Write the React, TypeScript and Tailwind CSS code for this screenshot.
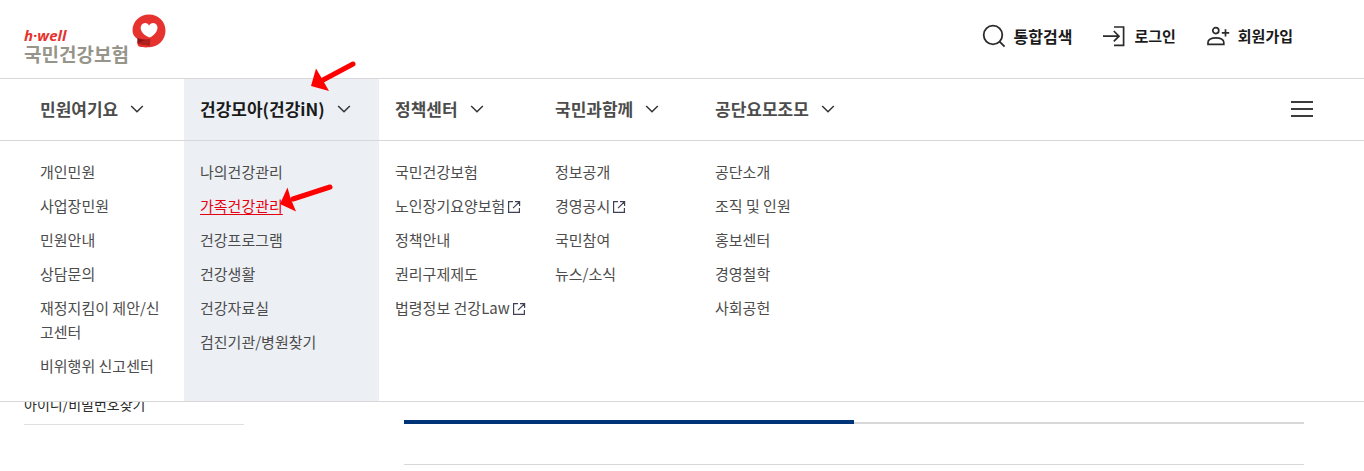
import { ReactNode } from "react";
import clsx from "clsx";

type MenuItem = {
  label: string;
  external?: boolean;
  current?: boolean;
};

type MenuGroup = {
  title: string;
  active?: boolean;
  items: MenuItem[];
};

const menu: MenuGroup[] = [
  {
    title: "민원여기요",
    items: [
      { label: "개인민원" },
      { label: "사업장민원" },
      { label: "민원안내" },
      { label: "상담문의" },
      { label: "재정지킴이 제안/신고센터" },
      { label: "비위행위 신고센터" },
    ],
  },
  {
    title: "건강모아(건강iN)",
    active: true,
    items: [
      { label: "나의건강관리" },
      { label: "가족건강관리", current: true },
      { label: "건강프로그램" },
      { label: "건강생활" },
      { label: "건강자료실" },
      { label: "검진기관/병원찾기" },
    ],
  },
  {
    title: "정책센터",
    items: [
      { label: "국민건강보험" },
      { label: "노인장기요양보험", external: true },
      { label: "정책안내" },
      { label: "권리구제제도" },
      { label: "법령정보 건강Law", external: true },
    ],
  },
  {
    title: "국민과함께",
    items: [
      { label: "정보공개" },
      { label: "경영공시", external: true },
      { label: "국민참여" },
      { label: "뉴스/소식" },
    ],
  },
  {
    title: "공단요모조모",
    items: [
      { label: "공단소개" },
      { label: "조직 및 인원" },
      { label: "홍보센터" },
      { label: "경영철학" },
      { label: "사회공헌" },
    ],
  },
];

const columns = "grid grid-cols-[160px_195px_160px_160px_160px]";

function ChevronIcon() {
  return (
    <svg
      viewBox="0 0 14 8"
      fill="none"
      stroke="#333"
      strokeWidth="1.5"
      className="h-2 w-3.5 shrink-0"
    >
      <path d="M1.200 1L7 6.800 12.800 1" />
    </svg>
  );
}

function ExternalIcon() {
  return (
    <svg
      viewBox="0 0 14 14"
      fill="none"
      stroke="#3f3f55"
      strokeWidth="1.2"
      className="ml-0.5 inline-block size-3.5 align-[-2px]"
    >
      <path d="M6 1.6H1.6v10.8h10.8V8M8 1.6h4.6V6M12.4 1.8L6 8.2" />
    </svg>
  );
}

function SearchIcon() {
  return (
    <svg viewBox="0 0 24 24" fill="none" stroke="#2b2b2b" strokeWidth="1.8" className="size-6">
      <circle cx="11" cy="11" r="9.3" />
      <path d="M17.6 17.6l5 5" />
    </svg>
  );
}

function LoginIcon() {
  return (
    <svg viewBox="0 0 24 24" fill="none" stroke="#2b2b2b" strokeWidth="1.7" className="size-6">
      <path d="M12 3h9.6v18.4H12M1 12.2h16M11.8 7l5.2 5.2-5.2 5.2" />
    </svg>
  );
}

function JoinIcon() {
  return (
    <svg viewBox="0 0 24 24" fill="none" stroke="#2b2b2b" strokeWidth="1.7" className="size-6">
      <circle cx="9.8" cy="6.6" r="3" />
      <path d="M2 20.300v-2c0-2.600 3.400-4.500 7.900-4.500s7.900 1.900 7.900 4.500v2z" />
      <path d="M19.5 5.2v7.4M15.8 8.9h7.4" />
    </svg>
  );
}

function Emblem() {
  return (
    <svg viewBox="0 0 34 34" className="h-[34px] w-[34px]">
      <path
        fill="#e6332f"
        d="M17 .5C26.500 .5 33.500 7.500 33.500 16.500S26.500 33 17.500 33.300c-3.500 .3-7.500 .2-9.800-.5-1.800-.6-2.400-1.800-2.200-4.300L5.700 25C2.500 23 .5 20.500 .5 16.500 .5 7.500 7.500 .5 17 .5z"
      />
      <path fill="#8e1517" d="M5.500 24c4 1.500 8 2 12.700 1.600l-.5 5.800c-4-.2-8-.8-12.300-2.200z" />
      <path fill="#b3211f" d="M5.400 29.200l8.500-3.400 4.300-.2-.5 5.800c-4-.2-8-.8-12.300-2.200z" />
      <path
        fill="#fff"
        d="M17 11.500C18.300 9 21 8.300 23.200 9.500c2.700 1.500 2.800 5 1.400 7.700-1.500 3-4.300 5-6.800 6.400-3.500-1.300-6.800-3.200-8.400-6.500-1.300-2.800-.9-6 1.400-7.400 2.200-1.300 5-.6 6.200 1.800z"
      />
    </svg>
  );
}

function Logo() {
  return (
    <a href="#" className="flex items-start gap-[3px]">
      <span className="flex flex-col pt-3">
        <span className="font-['Open_Sans',sans-serif] text-[15px]/[18px] font-bold text-[#e6332f] italic">
          h·well
        </span>
        <span className="text-[19px]/5 font-bold text-[#97958a]">국민건강보험</span>
      </span>
      <Emblem />
    </a>
  );
}

function UtilLink({
  icon,
  className,
  children,
}: {
  icon: ReactNode;
  className?: string;
  children: ReactNode;
}) {
  return (
    <a
      href="#"
      className={clsx("flex items-center gap-2 font-bold text-[#1a1a1a]", className)}
    >
      {icon}
      {children}
    </a>
  );
}

function PointerArrow({ className, d, head }: { className: string; d: string; head: string }) {
  return (
    <svg viewBox="0 0 60 40" className={clsx("pointer-events-none absolute z-20 h-10 w-15", className)}>
      <path d={d} stroke="#f00" strokeWidth="5" strokeLinecap="round" />
      <path d={head} fill="#f00" />
    </svg>
  );
}

function MenuLink({ item }: { item: MenuItem }) {
  return (
    <li className="relative">
      <a
        href="#"
        className={clsx(
          item.external ? "whitespace-nowrap" : "break-all",
          item.current ? "text-[#e60012] underline underline-offset-2" : "text-[#4c4c4c]",
        )}
      >
        {item.label}
        {item.external && <ExternalIcon />}
      </a>
      {item.current && (
        <PointerArrow
          className="-top-4 left-19"
          d="M54 9L17 21"
          head="M4 26L11.500 9.500 14.500 20 20 33.500z"
        />
      )}
    </li>
  );
}

function Navigation() {
  return (
    <nav className="relative z-10 border-b border-[#d8d8d8] bg-white">
      <div className="flex items-stretch justify-between border-y border-[#d8d8d8] pr-[51px] pl-6">
        <div className={columns}>
          {menu.map((group) => (
            <div
              key={group.title}
              className={clsx("relative flex", group.active && "bg-[#ecf0f5]")}
            >
              <button
                type="button"
                className={clsx(
                  "flex h-[61px] items-center gap-3 px-4 pb-0.5 text-[17px] font-bold whitespace-nowrap",
                  group.active ? "text-[#1a1a1a]" : "text-[#4c4c4c]",
                )}
              >
                {group.title}
                <ChevronIcon />
              </button>
              {group.active && (
                <PointerArrow
                  className="-top-6 left-31"
                  d="M45 9L15 25"
                  head="M3 31L8 13.500 13 22 21 36z"
                />
              )}
            </div>
          ))}
        </div>
        <button
          type="button"
          aria-label="전체메뉴"
          className="flex flex-col justify-center gap-[5px] pb-0.5"
        >
          <span className="h-0.5 w-[22px] bg-[#3c3c3c]" />
          <span className="h-0.5 w-[22px] bg-[#3c3c3c]" />
          <span className="h-0.5 w-[22px] bg-[#3c3c3c]" />
        </button>
      </div>
      <div className={clsx(columns, "pl-6")}>
        {menu.map((group) => (
          <ul
            key={group.title}
            className={clsx(
              "flex flex-col gap-2.5 pt-[19px] pr-4 pb-[23px] pl-4 text-[15px]/6",
              group.active && "bg-[#ecf0f5]",
            )}
          >
            {group.items.map((item) => (
              <MenuLink key={item.label} item={item} />
            ))}
          </ul>
        ))}
      </div>
    </nav>
  );
}

export default function App() {
  return (
    <div className="min-h-screen overflow-x-hidden bg-white font-['Noto_Sans_CJK_KR',sans-serif]">
      <header>
        <div className="flex h-[78px] items-start justify-between pt-3.5 pr-[71px] pl-6">
          <Logo />
          <div className="flex items-center gap-[30px] pt-2.5">
            <UtilLink icon={<SearchIcon />} className="text-base/6">
              통합검색
            </UtilLink>
            <UtilLink icon={<LoginIcon />} className="text-[15px]/6">
              로그인
            </UtilLink>
            <UtilLink icon={<JoinIcon />} className="text-[15px]/6">
              회원가입
            </UtilLink>
          </div>
        </div>
        <Navigation />
      </header>
      <main className="-mt-2.5 flex items-start gap-40 pr-[60px] pl-6">
        <aside className="w-[220px] border-b border-[#e0e0e0] pb-2 text-sm/6">
          <a href="#" className="text-[#2b2b2b]">
            아이디/비밀번호찾기
          </a>
        </aside>
        <section className="flex-1 border-b border-[#d8d8d8] pt-7 pb-10">
          <div className="flex items-end">
            <div className="h-1 w-1/2 bg-[#003478]" />
            <div className="h-0.5 w-1/2 bg-[#d8d8d8]" />
          </div>
        </section>
      </main>
    </div>
  );
}
